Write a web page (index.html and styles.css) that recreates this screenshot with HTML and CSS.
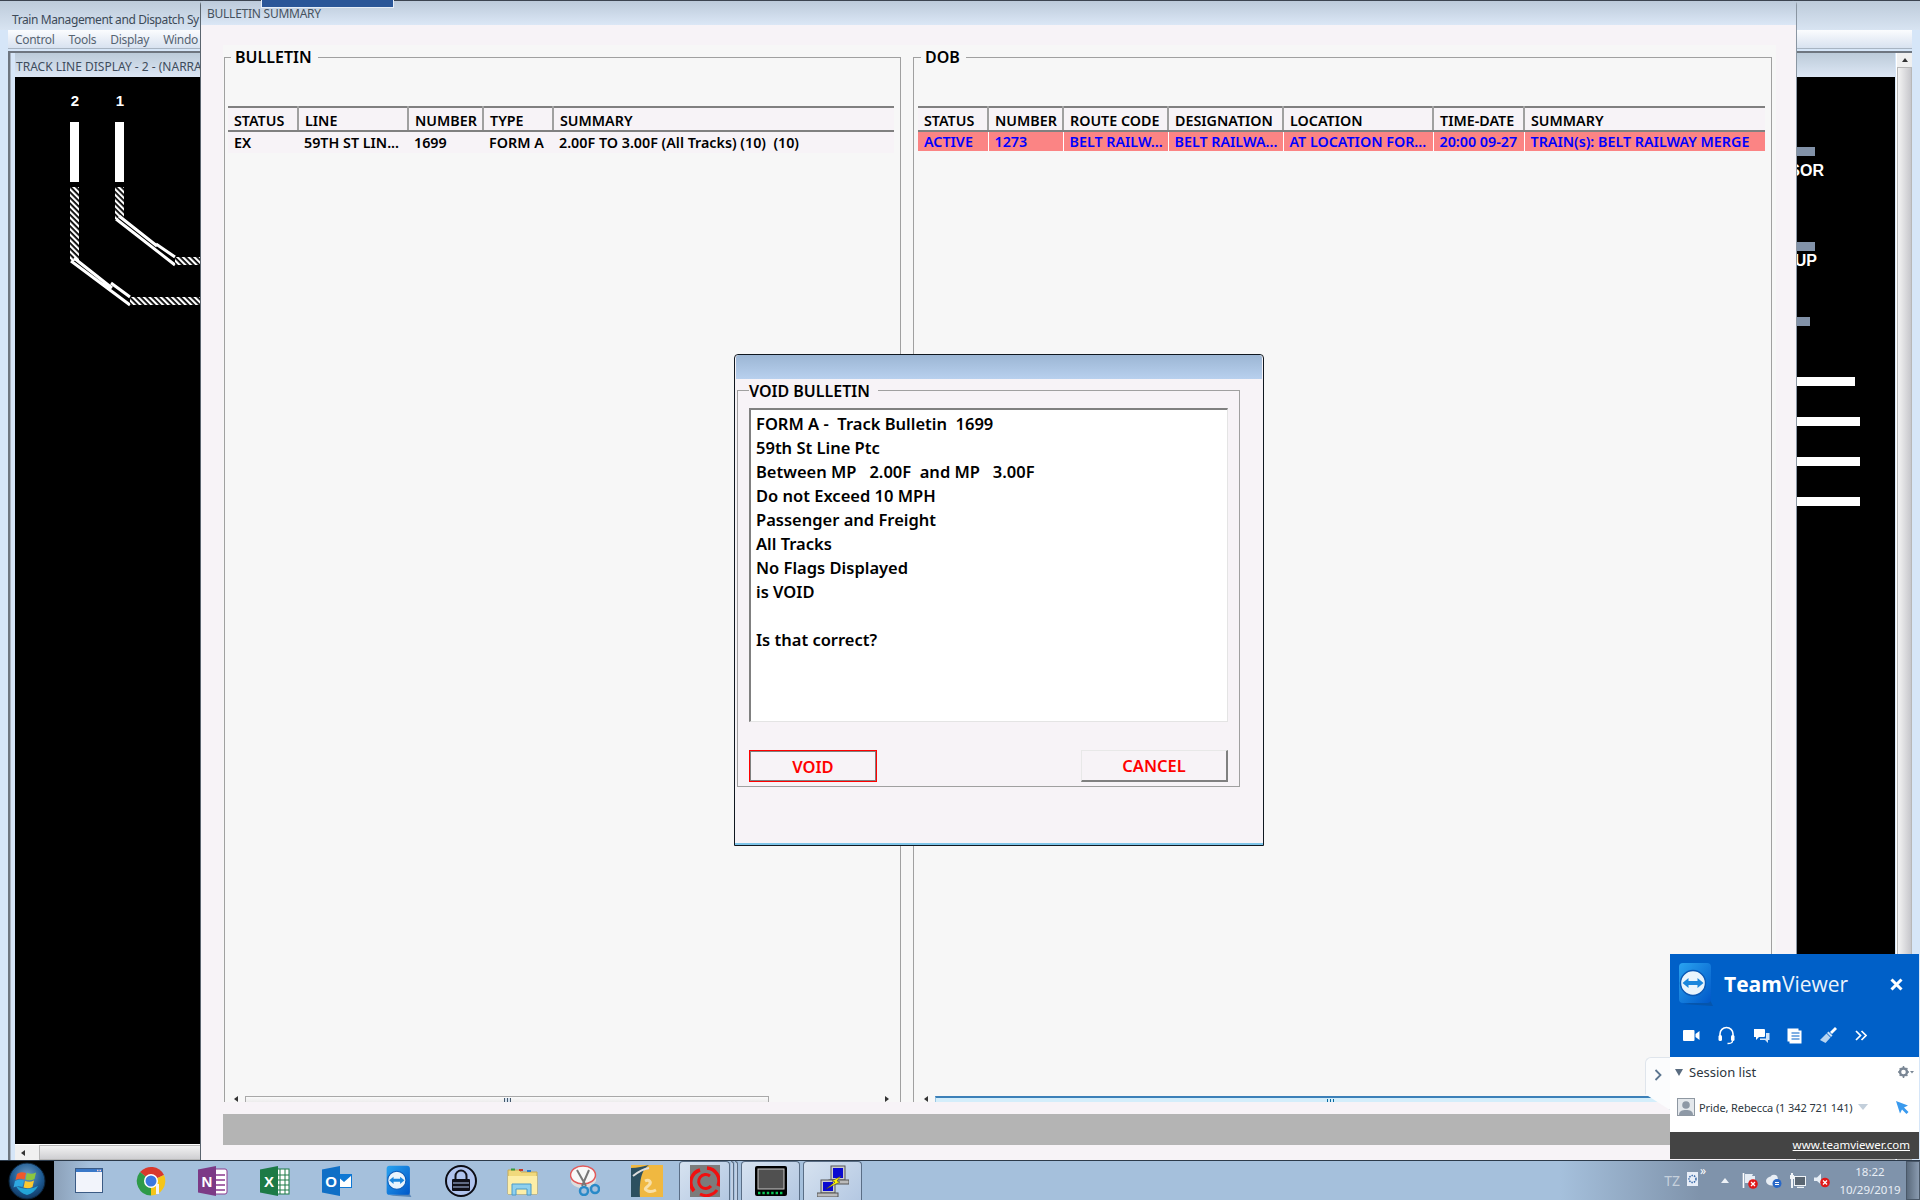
FILE: index.html
```html
<!DOCTYPE html>
<html lang="en">
<head>
    <meta charset="UTF-8">
    <title>Bulletin Summary</title>
    <link rel="stylesheet" href="styles.css">
</head>
<body>

<svg class="defs" width="0" height="0">
    <defs>
        <pattern id="hatch" width="4" height="4" patternUnits="userSpaceOnUse" patternTransform="rotate(-45)">
            <rect width="4" height="4" fill="#000"/>
            <rect width="2.2" height="4" fill="#fff"/>
        </pattern>
        <linearGradient id="tvBlue" x1="0" y1="0" x2="1" y2="1">
            <stop offset="0" stop-color="#29a3f0"/>
            <stop offset="1" stop-color="#0057c8"/>
        </linearGradient>
        <symbol id="tvLogo" viewBox="0 0 36 44">
            <path d="M5 42l30 2-3-6z" fill="#0a4a90" opacity="0.5"/>
            <rect x="1" y="1" width="32" height="40" rx="4" fill="url(#tvBlue)"/>
            <circle cx="15" cy="21" r="12.5" fill="#eaf4fc" stroke="#0a58b4" stroke-width="1.4"/>
            <path d="M4.500 21l6-5v3h9v-3l6 5-6 5v-3h-9v3z" fill="#1c86dc"/>
        </symbol>
    </defs>
</svg>

<!-- main application window, behind everything -->
<div class="main-window">
    <div class="main-title">Train Management and Dispatch Sy</div>
    <div class="main-menu">
        <span>Control</span>
        <span>Tools</span>
        <span>Display</span>
        <span>Windo</span>
    </div>
    <div class="mdi-frame">
        <div class="track-window">
            <div class="track-title">TRACK LINE DISPLAY - 2 - (NARRA</div>
            <div class="track-canvas">
                <svg class="track-svg" viewBox="16 76 1879 1069" width="1879" height="1069">
                    <text x="76" y="105" class="track-num" text-anchor="middle">2</text>
                    <text x="121" y="105" class="track-num" text-anchor="middle">1</text>
                    <rect x="71" y="121" width="9" height="60" fill="#fff"/>
                    <rect x="116" y="121" width="9" height="60" fill="#fff"/>
                    <rect x="71" y="186" width="9" height="74" fill="url(#hatch)"/>
                    <rect x="116" y="186" width="9" height="32" fill="url(#hatch)"/>
                    <path d="M72 260l59 44M75 257l38 30M112 282l19 14" stroke="#fff" stroke-width="3" fill="none"/>
                    <path d="M117 218l59 46M120 215l38 30M157 243l19 13" stroke="#fff" stroke-width="3" fill="none"/>
                    <rect x="131" y="296" width="70" height="8" fill="url(#hatch)"/>
                    <rect x="176" y="256" width="25" height="8" fill="url(#hatch)"/>
                    <rect x="1798" y="146" width="18" height="9" fill="#8292a8"/>
                    <text x="1825" y="175" class="track-label" text-anchor="end">SOR</text>
                    <rect x="1798" y="241" width="18" height="9" fill="#8292a8"/>
                    <text x="1818" y="265" class="track-label" text-anchor="end">UP</text>
                    <rect x="1798" y="316" width="13" height="9" fill="#8292a8"/>
                    <rect x="1798" y="376" width="58" height="9" fill="#fff"/>
                    <rect x="1798" y="416" width="63" height="9" fill="#fff"/>
                    <rect x="1798" y="456" width="63" height="9" fill="#fff"/>
                    <rect x="1798" y="496" width="63" height="9" fill="#fff"/>
                </svg>
            </div>
            <div class="track-hscroll"><i class="arrow-left"></i><b></b></div>
        </div>
        <div class="track-vscroll"><i class="arrow-up"></i><b></b></div>
    </div>
</div>

<!-- bulletin summary window -->
<div class="bulletin-window">
    <div class="accent-tab"></div>
    <div class="bulletin-title">BULLETIN SUMMARY</div>
    <div class="groups">
        <div class="group group-bulletin">
            <div class="group-name">BULLETIN</div>
            <table class="grid">
                <colgroup>
                    <col class="w70"><col class="w110"><col class="w75"><col class="w70"><col>
                </colgroup>
                <thead>
                    <tr><th>STATUS</th><th>LINE</th><th>NUMBER</th><th>TYPE</th><th>SUMMARY</th></tr>
                </thead>
                <tbody>
                    <tr class="row-plain">
                        <td>EX</td><td>59TH ST LIN...</td><td>1699</td><td>FORM A</td>
                        <td class="pre">2.00F TO 3.00F (All Tracks) (10)  (10)</td>
                    </tr>
                </tbody>
            </table>
            <div class="hscroll">
                <i class="arrow-left"></i>
                <div class="hscroll-thumb"><span class="grip"></span></div>
                <i class="arrow-right"></i>
            </div>
        </div>
        <div class="group group-dob">
            <div class="group-name">DOB</div>
            <table class="grid">
                <colgroup>
                    <col class="w70"><col class="w75"><col class="w105"><col class="w115"><col class="w150"><col class="w91"><col>
                </colgroup>
                <thead>
                    <tr><th>STATUS</th><th>NUMBER</th><th>ROUTE CODE</th><th>DESIGNATION</th><th>LOCATION</th><th>TIME-DATE</th><th>SUMMARY</th></tr>
                </thead>
                <tbody>
                    <tr class="row-active">
                        <td>ACTIVE</td><td>1273</td><td>BELT RAILW...</td><td>BELT RAILWA...</td><td>AT LOCATION FOR...</td><td>20:00 09-27</td>
                        <td>TRAIN(s): BELT RAILWAY MERGE</td>
                    </tr>
                </tbody>
            </table>
            <div class="hscroll hscroll-blue">
                <i class="arrow-left"></i>
                <div class="hscroll-thumb"><span class="grip"></span></div>
            </div>
        </div>
    </div>
    <div class="status-strip"></div>
</div>

<!-- modal -->
<div class="dialog">
    <div class="dialog-title"></div>
    <div class="dialog-group">
        <div class="group-name dialog-name">VOID BULLETIN</div>
        <div class="dialog-text">
            <div>FORM A -  Track Bulletin  1699</div>
            <div>59th St Line Ptc</div>
            <div>Between MP   2.00F  and MP   3.00F</div>
            <div>Do not Exceed 10 MPH</div>
            <div>Passenger and Freight</div>
            <div>All Tracks</div>
            <div>No Flags Displayed</div>
            <div>is VOID</div>
            <div>&nbsp;</div>
            <div>Is that correct?</div>
        </div>
        <div class="dialog-buttons">
            <button class="btn btn-void">VOID</button>
            <button class="btn btn-cancel">CANCEL</button>
        </div>
    </div>
</div>

<!-- teamviewer panel -->
<div class="tv-tab">
    <svg width="8" height="12" viewBox="0 0 8 12"><path d="M1.5 1l5 5-5 5" fill="none" stroke="#5c7690" stroke-width="1.8"/></svg>
</div>
<div class="tv-panel">
    <div class="tv-head">
        <div class="tv-brand">
            <svg class="tv-logo" width="36" height="44"><use href="#tvLogo"/></svg>
            <div class="tv-name"><b>Team</b>Viewer</div>
            <svg class="tv-close" width="13" height="13" viewBox="0 0 13 13"><path d="M1.5 1.5l10 10M11.5 1.5l-10 10" stroke="#fff" stroke-width="3"/></svg>
        </div>
        <div class="tv-tools">
            <svg width="17" height="13" viewBox="0 0 17 13"><rect y="1" width="11.5" height="11" rx="1" fill="#fff"/><path d="M12.5 5l4-3v9l-4-3z" fill="#fff"/></svg>
            <svg width="17" height="19" viewBox="0 0 17 19"><path d="M2 11V8a6.500 6.500 0 0 1 13 0v3" fill="none" stroke="#fff" stroke-width="1.6"/><rect x="0.500" y="9" width="3.500" height="6" rx="1.500" fill="#fff"/><rect x="13" y="9" width="3.500" height="6" rx="1.500" fill="#fff"/><path d="M14.500 15c0 2-2 2.500-5 2.500" fill="none" stroke="#fff" stroke-width="1.300"/></svg>
            <svg width="17" height="16" viewBox="0 0 17 16"><path d="M1 1h10a1 1 0 0 1 1 1v6a1 1 0 0 1-1 1H6l-3 3V9H1z" fill="#fff"/><path d="M13 5h3.500v7H15v3l-3-3H7v-1.500h6z" fill="#cfe3f8"/></svg>
            <svg width="15" height="16" viewBox="0 0 15 16"><path d="M0.500 0.500h11v2h3v13h-12v-2h-2z" fill="#fff"/><path d="M4.500 5h8M4.500 8h8M4.500 11h8" stroke="#0060c8" stroke-width="1.200"/></svg>
            <svg width="17" height="17" viewBox="0 0 17 17"><path d="M10 5l5-5 2 2-5 5z" fill="#fff"/><path d="M8.500 4.500l4 4-1.500 1.500-4-4z" fill="#cfe3f8"/><path d="M6.500 6.500l4 4-5 5.500-5.500-3z" fill="#b8d4f0"/></svg>
            <svg width="12" height="11" viewBox="0 0 12 11"><path d="M1 1l4.500 4.500L1 10M6.500 1L11 5.500 6.500 10" fill="none" stroke="#fff" stroke-width="1.700"/></svg>
        </div>
    </div>
    <div class="tv-body">
        <div class="tv-session">
            <i class="tri-down"></i>
            <span>Session list</span>
            <svg class="tv-gear" width="16" height="12" viewBox="0 0 16 12"><circle cx="5.500" cy="6" r="3.500" fill="none" stroke="#7a8694" stroke-width="2.400"/><path d="M5.500 0v2M5.500 10v2M0 6h2M9 6h2M1.700 2.200l1.400 1.400M8 8.500l1.400 1.400M1.700 9.800l1.400-1.400M8 3.500l1.400-1.400" stroke="#7a8694" stroke-width="1.500"/><path d="M12 5h4l-2 2.500z" fill="#7a8694"/></svg>
        </div>
        <div class="tv-person">
            <svg width="18" height="18" viewBox="0 0 18 18"><rect x="0.500" y="0.500" width="17" height="17" fill="#e4e8ec" stroke="#8f98a2"/><circle cx="9" cy="7" r="3.800" fill="#8e99a6"/><path d="M2 17c0-4 3-5 7-5s7 1 7 5z" fill="#8e99a6"/></svg>
            <span class="tv-person-name">Pride, Rebecca (1 342 721 141)</span>
            <i class="tri-pale"></i>
            <svg class="tv-cursor" width="13" height="13" viewBox="0 0 13 13"><path d="M0 0l12 4.500-4 2 4.500 4.500-2 2L6 8.500l-2 4z" fill="#3a9aee"/></svg>
        </div>
    </div>
    <div class="tv-foot"><span>www.teamviewer.com</span></div>
</div>

<!-- windows taskbar -->
<div class="taskbar">
    <div class="start-slot">
        <svg width="38" height="38" viewBox="0 0 38 38">
            <defs>
                <radialGradient id="orb" cx="0.500" cy="0.350" r="0.700"><stop offset="0" stop-color="#6f9cc4"/><stop offset="0.600" stop-color="#1d5a92"/><stop offset="1" stop-color="#0d2f55"/></radialGradient>
            </defs>
            <circle cx="19" cy="19" r="18" fill="url(#orb)" stroke="#0b2238"/>
            <path d="M8 24a18 14 0 0 0 22 0 18 18 0 0 1-11 9 18 18 0 0 1-11-9z" fill="#25b8e8" opacity="0.8"/>
            <path d="M9 12c3-2 6-2 9-1l-1.500 6.500c-3-1-5.500-1-9 .5z" fill="#f0592a"/>
            <path d="M19 11c3 1 6 1 9-.5L26.500 17c-3 1.500-6 1.500-9 .5z" fill="#8cc63f"/>
            <path d="M7 19c3-1.500 6-1.500 9-.5L14.500 25c-3-1-6-1-9 .5z" fill="#2ea8e0"/>
            <path d="M17 19c3 1 6 1 9-.5L24.500 25c-3 1.500-6 1.500-9 .5z" fill="#fdc82f"/>
        </svg>
    </div>

    <div class="slot">
        <svg width="28" height="25" viewBox="0 0 28 25"><rect x="0.500" y="0.500" width="27" height="24" fill="#f2f4fb" stroke="#3b5b85"/><rect x="1" y="1" width="26" height="3" fill="#3a78c8"/><path d="M22 2.500h4" stroke="#f8d0d0" stroke-width="1.500" stroke-dasharray="1.500 1"/></svg>
    </div>
    <div class="slot">
        <svg width="30" height="30" viewBox="0 0 30 30">
            <path d="M15 15L4 6A14.500 14.500 0 0 1 28 9z" fill="#d8382c"/>
            <path d="M15 15L28 9A14.500 14.500 0 0 1 15 29.500z" fill="#f5c518"/>
            <path d="M15 15V29.500A14.500 14.500 0 0 1 4 6z" fill="#2e9a48"/>
            <circle cx="15" cy="15" r="7" fill="#fff"/><circle cx="15" cy="15" r="5.500" fill="#3b78e0"/>
            <path d="M20 18h3v10h-3z" fill="#f4f4f4"/>
        </svg>
    </div>
    <div class="slot">
        <svg width="30" height="30" viewBox="0 0 30 30"><rect x="14" y="3" width="15" height="25" rx="2" fill="#fff" stroke="#8a3a8e"/><path d="M16 9h11M16 14h11M16 19h11M16 24h11" stroke="#8a3a8e" stroke-width="1.500"/><path d="M0 3.500L18 0v30L0 26.500z" fill="#7c3a86"/><text x="9" y="21" class="app-letter" text-anchor="middle">N</text></svg>
    </div>
    <div class="slot">
        <svg width="30" height="30" viewBox="0 0 30 30"><rect x="14" y="3" width="15" height="25" fill="#fff" stroke="#1c7a46"/><path d="M14 9h15M14 14h15M14 19h15M14 24h15M20 3v25M25 3v25" stroke="#1c7a46"/><path d="M0 3.500L18 0v30L0 26.500z" fill="#1c7a46"/><text x="9" y="21" class="app-letter" text-anchor="middle">X</text></svg>
    </div>
    <div class="slot">
        <svg width="30" height="30" viewBox="0 0 30 30"><rect x="14" y="8" width="16" height="14" fill="#0f78d4"/><path d="M15 9l7 6 7-6v12H15z" fill="#fff"/><path d="M15 9l7 6 7-6" fill="none" stroke="#0f78d4" stroke-width="1.500"/><path d="M0 3.500L18 0v30L0 26.500z" fill="#0f6fc6"/><text x="9" y="21" class="app-letter" text-anchor="middle">O</text></svg>
    </div>
    <div class="slot">
        <svg width="28" height="32" viewBox="0 0 36 44"><use href="#tvLogo"/></svg>
    </div>
    <div class="slot">
        <svg width="32" height="32" viewBox="0 0 32 32"><circle cx="16" cy="16" r="15" fill="#b0c4ee" stroke="#0c0c14" stroke-width="2"/><path d="M10.500 15v-4a5.500 5.500 0 0 1 11 0v4" fill="none" stroke="#101018" stroke-width="2"/><rect x="7" y="14" width="18" height="12" rx="1" fill="#101018"/><path d="M8 18h16M8 22h16" stroke="#b0c4ee"/></svg>
    </div>
    <div class="slot">
        <svg width="32" height="31" viewBox="0 0 32 31"><path d="M1 5h11l2 2h16v22H1z" fill="#f0d97c" stroke="#c8aa50"/><path d="M1 11h29v18H1z" fill="#fdeea8"/><rect x="4" y="3.500" width="4" height="2" fill="#3a9a3a"/><rect x="12" y="4" width="4" height="2" fill="#c83a2a"/><rect x="20" y="5" width="4" height="2" fill="#2a7ac8"/><path d="M5 19h19v11h-4v-6H9v6H5z" fill="#8fd0ee" stroke="#4a9ac8"/></svg>
    </div>
    <div class="slot">
        <svg width="30" height="31" viewBox="0 0 30 31"><path d="M1 12c2 5 7 7 12 7s10-3 13-8v5c-3 5-8 7-13 7S3 21 1 17z" fill="#ddd"/><ellipse cx="13" cy="10" rx="12.500" ry="9" fill="#f8f8f8" stroke="#e25a5a" stroke-width="1.500"/><path d="M7 5l9 16M19 5l-7 16" stroke="#777" stroke-width="2"/><circle cx="14" cy="26" r="4" fill="none" stroke="#2a8ac8" stroke-width="2.500"/><circle cx="25" cy="24" r="4" fill="none" stroke="#2a8ac8" stroke-width="2.500"/></svg>
    </div>
    <div class="slot">
        <svg width="32" height="32" viewBox="0 0 32 32"><rect width="32" height="32" fill="#f0b840"/><path d="M0 3c6 0 13-2 18-3-6 4-10 12-9 32H0z" fill="#2c5060"/><path d="M2 11c5-4 10-7 16-8" fill="none" stroke="#ddd" stroke-width="2"/><path d="M14 16c4-2 7 1 4 4-3 3-6 4-1 6 3 1 6 0 8-1" fill="none" stroke="#f8e0a8" stroke-width="3"/></svg>
    </div>

    <div class="task-btn task-btn-stacked">
        <svg width="30" height="32" viewBox="0 0 30 32"><rect width="30" height="32" fill="#7c7c7c"/><path d="M17 3a13 13 0 0 1 11 18" fill="none" stroke="#f01010" stroke-width="3.500"/><path d="M27 25a13 13 0 0 1-17 4" fill="none" stroke="#f01010" stroke-width="3"/><path d="M4 26a13 13 0 0 1 6-21" fill="none" stroke="#f01010" stroke-width="3.500"/><path d="M20 11a7 7 0 1 0 1 10" fill="none" stroke="#f01010" stroke-width="3"/></svg>
    </div>
    <div class="task-edge"></div>
    <div class="task-edge"></div>
    <div class="task-btn task-btn-wide">
        <svg width="32" height="30" viewBox="0 0 32 30"><rect width="32" height="30" rx="2" fill="#000"/><rect x="3" y="3" width="26" height="20" fill="#505050" stroke="#c8c8c8"/><path d="M3 27h26" stroke="#0ac85a" stroke-width="2.400" stroke-dasharray="2.400 2"/></svg>
    </div>
    <div class="task-btn task-btn-wide">
        <svg width="32" height="32" viewBox="0 0 32 32"><rect x="14" y="1" width="14" height="14" fill="#ccc" stroke="#555"/><rect x="16" y="3" width="10" height="10" fill="#0a0ad0"/><rect x="12" y="15" width="20" height="4" fill="#bbb" stroke="#555"/><rect x="4" y="15" width="14" height="13" fill="#ccc" stroke="#555"/><rect x="6" y="17" width="10" height="9" fill="#0a0ad0"/><rect x="0" y="28" width="21" height="4" fill="#bbb" stroke="#555"/><path d="M24 11l-9 5 3 1-9 7 14-7-3-1z" fill="#fff200" stroke="#333" stroke-width="0.500"/></svg>
    </div>

    <div class="tray">
        <span class="tray-tz">TZ</span>
        <svg class="tray-scan" width="11" height="14" viewBox="0 0 11 14"><rect width="11" height="14" fill="#e8eef8"/><circle cx="5.500" cy="7" r="3.500" fill="none" stroke="#3a6aa8" stroke-width="1.500" stroke-dasharray="1.500 1"/></svg>
        <span class="tray-more">»</span>
        <i class="tray-arrow"></i>
        <svg width="16" height="16" viewBox="0 0 16 16"><path d="M1.500 0v15" stroke="#fff" stroke-width="1.600"/><path d="M3 1h8l-1 2 3 0v7H3z" fill="#e6edf5"/><circle cx="11" cy="11" r="4.800" fill="#e01818"/><path d="M9 9l4 4M13 9l-4 4" stroke="#fff" stroke-width="1.300"/></svg>
        <svg width="16" height="14" viewBox="0 0 16 14"><ellipse cx="6" cy="7" rx="6" ry="4.500" fill="#e8eef5"/><circle cx="8" cy="4.500" r="3.800" fill="#e8eef5"/><circle cx="11" cy="9.500" r="4.500" fill="#2868c8"/><path d="M9 8.500h4M13 10.500H9" stroke="#fff" stroke-width="1.200"/></svg>
        <svg width="16" height="15" viewBox="0 0 16 15"><rect x="4.500" y="3.500" width="11" height="9" fill="#5a6672" stroke="#f0f4f8"/><path d="M7 14.500h7" stroke="#f0f4f8" stroke-width="1.500"/><path d="M2 0v15" stroke="#f0f4f8" stroke-width="2"/><rect y="2" width="4" height="4" fill="#f0f4f8"/></svg>
        <svg width="16" height="15" viewBox="0 0 16 15"><path d="M0 4.500h3l4-4v11l-4-3.500H0z" fill="#e6edf5"/><circle cx="11" cy="9.500" r="4.800" fill="#e01818"/><path d="M9 7.500l4 4M13 7.500l-4 4" stroke="#fff" stroke-width="1.300"/></svg>
        <div class="tray-clock">
            <div>18:22</div>
            <div>10/29/2019</div>
        </div>
        <div class="show-desktop"></div>
    </div>
</div>

</body>
</html>
```

FILE: styles.css
```css
* {
    margin: 0;
    padding: 0;
    box-sizing: border-box;
}

html, body {
    width: 1920px;
    height: 1200px;
    overflow: hidden;
    background-color: #a5c0dc;
    font-family: "Noto Sans", "Open Sans", sans-serif;
}

.defs {
    position: absolute;
}

/* main window */
.main-window {
    position: absolute;
    left: 0;
    top: 0;
    width: 1920px;
    height: 1160px;
    display: flex;
    flex-direction: column;
    background: #d6e6f8;
    border-top: 1px solid #3c4450;
}

.main-title {
    height: 29px;
    padding: 10px 0 0 12px;
    font-size: 12px;
    line-height: 17px;
    letter-spacing: -0.4px;
    color: #3c4a58;
    white-space: nowrap;
    background: linear-gradient(#bdcbda, #d8e4f2);
}

.main-menu {
    height: 19px;
    margin: 0 8px;
    display: flex;
    gap: 14px;
    padding-left: 7px;
    font-size: 12px;
    line-height: 19px;
    letter-spacing: -0.3px;
    color: #566472;
    background: linear-gradient(#fbfcfe, #d8e2f0);
    border-bottom: 1px solid #a8b4c2;
}

.mdi-frame {
    flex: 1;
    min-height: 0;
    margin: 2px 8px 0 8px;
    display: flex;
    border: 1px solid #6e7680;
    border-width: 2px 0 0 2px;
}

.track-window {
    flex: 1;
    min-width: 0;
    display: flex;
    flex-direction: column;
    padding-left: 4px;
    border-left: 1px solid #aab4c0;
}

.track-title {
    height: 24px;
    padding: 6px 0 0 1px;
    font-size: 12px;
    line-height: 16px;
    color: #3e4c5c;
    background: linear-gradient(#bccbd9, #dde7f5);
    white-space: nowrap;
}

.track-canvas {
    flex: 1;
    min-height: 0;
    background: black;
    overflow: hidden;
    border-bottom: 1px solid #fff;
}

.track-svg {
    display: block;
}

.track-num {
    font: bold 15px "Liberation Sans", sans-serif;
    fill: #fff;
}

.track-label {
    font: bold 16px "Liberation Sans", sans-serif;
    fill: #fff;
}

.track-hscroll {
    height: 15px;
    display: flex;
    align-items: center;
    background: #f0f0f0;
}

.track-hscroll b {
    margin-left: 14px;
    flex: 1;
    height: 100%;
    background: linear-gradient(#f2f2f2, #cfcfd2);
    border: 1px solid #b8b8b8;
}

.track-vscroll {
    width: 16px;
    margin-left: 1px;
    display: flex;
    flex-direction: column;
    align-items: center;
    background: #f0f0f0;
    padding-top: 5px;
    border-left: 1px solid #fff;
}

.track-vscroll b {
    margin-top: 5px;
    flex: 1;
    width: 100%;
    background: linear-gradient(90deg, #f4f4f4, #c6c6cb);
    border: 1px solid #b8b8b8;
}

.arrow-up {
    width: 0;
    height: 0;
    border: 3px solid transparent;
    border-top: 0;
    border-bottom: 4px solid #333;
}

.arrow-left {
    flex: none;
    width: 0;
    height: 0;
    border: 3px solid transparent;
    border-left: 0;
    border-right: 4px solid #333;
    margin-left: 6px;
}

.arrow-right {
    flex: none;
    width: 0;
    height: 0;
    border: 3px solid transparent;
    border-right: 0;
    border-left: 4px solid #333;
    margin-right: 5px;
}

/* bulletin summary window */
.bulletin-window {
    position: absolute;
    left: 200px;
    top: 0;
    width: 1597px;
    height: 1160px;
    display: flex;
    flex-direction: column;
    background: #f7f3f7;
    border-top: 1px solid #3c4450;
    border-left: 1px solid #5a646e;
    border-right: 1px solid #8a96a2;
    border-radius: 5px 5px 0 0;
}

.accent-tab {
    position: absolute;
    left: 60px;
    top: -1px;
    width: 133px;
    height: 8px;
    background: #2a5698;
    border: 1px solid #e6eef8;
    border-top: 0;
}

.bulletin-title {
    flex: none;
    height: 24px;
    padding: 5px 0 0 6px;
    font-size: 12px;
    line-height: 16px;
    letter-spacing: -0.25px;
    color: #46525e;
    background: linear-gradient(#bccada, #dbe7f6);
}

.groups {
    flex: none;
    height: 1057px;
    margin: 20px 20px 0 22px;
    padding: 12px 1px 0 1px;
    display: flex;
    gap: 12px;
    overflow: hidden;
    background: #f7f7f7;
}

.group {
    flex: none;
    display: flex;
    flex-direction: column;
    height: 100%;
    padding: 0 6px 0 3px;
    border: 1px solid #a0a0a0;
    border-bottom: 0;
}

.group-bulletin {
    width: 677px;
}

.group-dob {
    width: 859px;
    padding: 0 6px 0 4px;
}

.group-name {
    flex: none;
    width: fit-content;
    height: 22px;
    margin: -12px 0 38px 3px;
    padding: 0 6px 0 4px;
    font-size: 16px;
    font-weight: 600;
    line-height: 22px;
    color: #000;
    background: #f7f7f7;
}

/* data grids */
.grid {
    table-layout: fixed;
    border-collapse: collapse;
    width: 100%;
    font-size: 14.3px;
    font-weight: 600;
}

.w70 { width: 70px; }
.w75 { width: 75px; }
.w91 { width: 91px; }
.w105 { width: 105px; }
.w110 { width: 110px; }
.w115 { width: 115px; }
.w150 { width: 150px; }

.grid th {
    height: 24px;
    padding: 2px 0 0 6px;
    text-align: left;
    font-weight: 600;
    white-space: nowrap;
    overflow: hidden;
    color: #000;
    background: #f7f3f7;
    border-top: 2px solid #808080;
    border-bottom: 2px solid #808080;
    border-right: 2px solid #a0a0a0;
}

.grid th:last-child {
    border-right: 0;
}

.grid td {
    height: 22px;
    padding: 0 0 1px 6px;
    white-space: nowrap;
    overflow: hidden;
}

.pre {
    white-space: pre !important;
}

.row-plain td {
    color: #000;
    background: #f7f3f7;
}

.row-active td {
    color: #0000ff;
    height: 19px;
    padding-bottom: 0;
    background: #fb8484;
    border-left: 1px solid #fff;
    border-top: 2px solid #f7f7f7;
}

.row-active td:first-child {
    border-left: 0;
}

.hscroll {
    margin-top: auto;
    height: 6px;
    display: flex;
    align-items: center;
    flex: none;
}

.hscroll-thumb {
    flex: 1;
    height: 100%;
    text-align: center;
    background: linear-gradient(#fafafa, #ececec);
    border: 1px solid #a8a8a8;
    border-bottom: 0;
}

.group-bulletin .hscroll-thumb {
    margin: 0 116px 0 7px;
}

.hscroll-blue .hscroll-thumb {
    margin: 0 40px 0 7px;
    background: #d4eefb;
    border: 0;
    border-top: 2px solid #3c80b8;
    border-left: 1px solid #9cc8e4;
}

.grip {
    display: block;
    width: 7px;
    height: 4px;
    margin: 1px auto 0;
    background: repeating-linear-gradient(90deg, #44586c 0 1px, #d8e4f0 1px 3px);
}

.hscroll-blue .grip {
    background: repeating-linear-gradient(90deg, #0a6aa0 0 1px, #d4eefb 1px 3px);
}

.status-strip {
    flex: none;
    height: 31px;
    margin: 12px 25px 0 22px;
    background: #b4b4b4;
}

/* void dialog */
.dialog {
    position: absolute;
    left: 734px;
    top: 354px;
    width: 530px;
    height: 492px;
    display: flex;
    flex-direction: column;
    padding: 0 2px 2px 2px;
    background: #f7f3f7;
    border: 1px solid #101820;
    border-radius: 4px 4px 0 0;
    box-shadow: inset 0 -2px 0 #7ec4e8;
}

.dialog-title {
    flex: none;
    height: 24px;
    margin: 0 -1px;
    background: linear-gradient(#9cb6d4, #b8d0ee);
    border-radius: 3px 3px 0 0;
}

.dialog-group {
    width: 503px;
    height: 397px;
    margin-top: 11px;
    padding: 0 11px;
    display: flex;
    flex-direction: column;
    border: 1px solid #a0a0a0;
}

.dialog-name {
    margin: -11px 0 6px 0;
    padding: 0 8px 0 0;
    background: #f7f3f7;
}

.dialog-text {
    flex: none;
    height: 314px;
    padding: 2px 0 0 5px;
    font-size: 16.5px;
    font-weight: 600;
    line-height: 24px;
    color: #000;
    background: #fff;
    border: 1px solid #e4e4e4;
    border-top: 2px solid #808080;
    border-left: 2px solid #808080;
}

.dialog-text div {
    white-space: pre;
}

.dialog-buttons {
    margin-top: 28px;
    display: flex;
    justify-content: space-between;
}

.btn {
    height: 32px;
    font-family: inherit;
    font-size: 16.5px;
    font-weight: 600;
    color: #ff0000;
    background: #f7f3f7;
}

.btn-void {
    width: 128px;
    border: 1px solid #ff0000;
    box-shadow: inset 1px 1px 0 #808080, inset -1px -1px 0 #808080;
}

.btn-cancel {
    width: 147px;
    border: 1px solid #e8e8e8;
    border-right: 2px solid #808080;
    border-bottom: 2px solid #808080;
}

/* teamviewer */
.tv-tab {
    position: absolute;
    left: 1645px;
    top: 1057px;
    width: 25px;
    height: 53px;
    display: flex;
    justify-content: center;
    padding-top: 11px;
    background: #fbfcfd;
    border: 1px solid #dfe5ec;
    border-right: 0;
    border-radius: 6px 0 0 0;
    clip-path: polygon(0 0, 100% 0, 100% 100%, 0 70%);
}

.tv-panel {
    position: absolute;
    left: 1670px;
    top: 954px;
    width: 249px;
    height: 205px;
    display: flex;
    flex-direction: column;
    background: #fff;
}

.tv-head {
    height: 103px;
    flex: none;
    padding: 8px 0 0 8px;
    background: #0060c8;
}

.tv-brand {
    display: flex;
    align-items: center;
    height: 44px;
}

.tv-name {
    margin-left: 10px;
    font-family: "Open Sans", sans-serif;
    font-size: 21px;
    color: #eaf3fc;
}

.tv-name b {
    font-weight: 700;
    color: #fff;
}

.tv-close {
    margin-left: auto;
    margin-right: 16px;
}

.tv-tools {
    margin: 20px 0 0 5px;
    width: 184px;
    display: flex;
    justify-content: space-between;
    align-items: center;
}

.tv-body {
    flex: 1;
    padding: 0 0 0 5px;
}

.tv-session {
    height: 30px;
    display: flex;
    align-items: center;
    gap: 6px;
    font-size: 13px;
    color: #2c3640;
}

.tri-down {
    width: 0;
    height: 0;
    border: 4.5px solid transparent;
    border-top: 7px solid #5a6c80;
    border-bottom: 0;
}

.tv-gear {
    margin-left: auto;
    margin-right: 5px;
}

.tv-person {
    margin: 11px 0 0 2px;
    display: flex;
    align-items: center;
    height: 18px;
}

.tv-person-name {
    margin-left: 4px;
    font-size: 11px;
    letter-spacing: -0.1px;
    color: #2c3640;
    white-space: nowrap;
}

.tri-pale {
    margin-left: 5px;
    width: 0;
    height: 0;
    border: 5px solid transparent;
    border-top: 6px solid #c3cfdb;
    border-bottom: 0;
}

.tv-cursor {
    margin-left: auto;
    margin-right: 10px;
}

.tv-foot {
    flex: none;
    height: 27px;
    padding-right: 9px;
    text-align: right;
    font-size: 11.5px;
    line-height: 26px;
    color: #fff;
    background: #444;
    text-decoration: underline;
}

/* taskbar */
.taskbar {
    position: absolute;
    left: 0;
    top: 1160px;
    width: 1920px;
    height: 40px;
    display: flex;
    background: linear-gradient(90deg, #8ba0b8 54px, #a5c0dc 90px, #a5c0dc 1560px, #7f93ab 1700px);
    border-top: 1px solid #2c3a4a;
}

.start-slot {
    flex: none;
    width: 54px;
    margin-right: 4px;
    display: flex;
    align-items: center;
    justify-content: center;
    background: #000;
}

.slot {
    flex: none;
    width: 62px;
    display: flex;
    align-items: center;
    justify-content: center;
}

.app-letter {
    font: bold 15px "Liberation Sans", sans-serif;
    fill: #fff;
}

.task-btn {
    flex: none;
    display: flex;
    align-items: center;
    justify-content: center;
    margin-left: 3px;
    background: linear-gradient(135deg, #d6e2f0, #b4c8e2);
    border: 1px solid #5a6e86;
    border-radius: 4px 4px 0 0;
    border-bottom: 0;
}

.task-btn-stacked {
    width: 51px;
    margin-left: 1px;
}

.task-btn-wide {
    width: 59px;
}

.task-btn-stacked + .task-edge {
    margin-left: 1px;
}

.task-edge {
    flex: none;
    width: 3px;
    margin-left: 1px;
    background: #c0d0e4;
    border: 1px solid #5a6e86;
    border-left: 0;
    border-bottom: 0;
    border-radius: 0 4px 0 0;
}

.tray {
    margin-left: auto;
    display: flex;
    align-items: center;
    color: #e8eef5;
}

.tray-tz {
    font-size: 14px;
    color: #c5d0dc;
    margin-right: 7px;
}

.tray-scan {
    align-self: flex-start;
    margin-top: 11px;
}

.tray-more {
    align-self: flex-start;
    width: 8px;
    margin: 2px 13px 0 2px;
    font-size: 12px;
    line-height: 16px;
    color: #fff;
}

.tray-arrow {
    width: 0;
    height: 0;
    margin-right: 13px;
    border: 4px solid transparent;
    border-top: 0;
    border-bottom: 5px solid #eef2f7;
}

.tray svg + svg {
    margin-left: 8px;
}

.tray-arrow + svg {
    margin-left: 0;
}

.tray-clock {
    margin-left: 9px;
    width: 62px;
    font-size: 11.5px;
    line-height: 18px;
    text-align: center;
    color: #e8eef5;
    white-space: nowrap;
}

.show-desktop {
    width: 14px;
    height: 100%;
    margin-left: 5px;
    background: linear-gradient(90deg, #5a6a7c, #8a9bb0);
    border: 1px solid #4a5868;
}
```
